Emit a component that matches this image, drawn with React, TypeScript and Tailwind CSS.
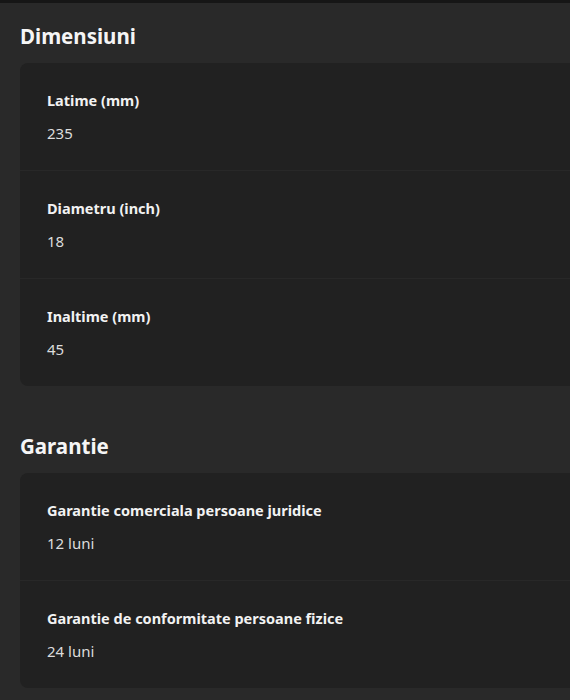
import React from "react";

const sections = [
  {
    title: "Dimensiuni",
    rows: [
      ["Latime (mm)", "235"],
      ["Diametru (inch)", "18"],
      ["Inaltime (mm)", "45"],
    ],
  },
  {
    title: "Garantie",
    rows: [
      ["Garantie comerciala persoane juridice", "12 luni"],
      ["Garantie de conformitate persoane fizice", "24 luni"],
    ],
  },
];

export default function App() {
  return (
    <div
      className="w-[570px] h-[700px] overflow-hidden bg-[#292929] text-white"
      style={{ fontFamily: "'Noto Sans', Inter, sans-serif" }}
    >
      <div className="h-[3px] bg-[#161616]" />
      <div className="flex flex-col pt-[19px]">
        {sections.map((s, i) => (
          <div key={s.title} className={i > 0 ? "mt-[46px]" : ""}>
            <h2 className="pl-5 text-[20.5px] leading-[28px] font-bold text-[#f5f5f5]">{s.title}</h2>
            <div className="ml-5 mt-[13px] w-[600px] rounded-l-lg bg-[#212121] overflow-hidden">
              {s.rows.map(([label, value], j) => (
                <div
                  key={label}
                  className={
                    "pl-[27px] pt-[27px] pb-[27px] flex flex-col gap-[13px] " +
                    (j > 0 ? "border-t border-[#282828]" : "")
                  }
                >
                  <div className="text-[14.5px] leading-5 font-bold text-[#f2f2f2]">{label}</div>
                  <div className="text-[15px] leading-5 text-[#dcdcdc]">{value}</div>
                </div>
              ))}
            </div>
          </div>
        ))}
      </div>
    </div>
  );
}
